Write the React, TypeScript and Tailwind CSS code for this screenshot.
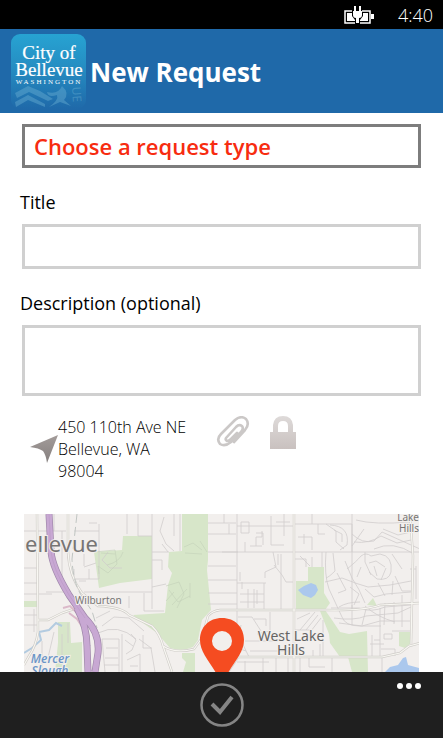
import React from 'react';

const parks = [
  'M99 22H128V65L96 69L75 74L70 38L98 36Z',
  'M158 0H184V46L183 56L187 96L178 106L174 126L169 133Q158 138 146 134L133 119L119 109L109 101L141 99L144 71L148 59L144 53L145 38L158 37Z',
  'M34 108H46L47 129L58 128V158H31L34 129Z',
  'M158 139H171V158H159L162 148L158 144Z',
  'M0 87H13V93H0Z',
  'M284 53H300V79L306 89L301 96L308 106L316 118L325 120L343 117L344 158H328L324 143L316 143L306 129L305 120L296 97L272 95V67L284 67Z',
  'M375 118H386V130L381 134L375 132Z',
  'M343 91L349 84L353 92Z',
];

const water = [
  'M274 76L280 72L287 69L292 71L294 76L291 81L287 84L279 81Z',
  'M361 158L366 153L374 151L379 144L382 143L384 151L395 154V158Z',
];

const mainRoads = [
  'M13 0L14 118Q12 132 5 142L0 151',
  'M270 0V158',
  'M44 0V38Q45 62 58 79L74 92Q98 93 105 101L128 112Q136 120 139 132L148 158',
  'M139 132Q151 140 170 135L178 124L184 102Q188 97 196 96H300Q340 97 356 91L396 89',
  'M14 106H24L38 99L50 95',
  'M210 143H358L376 139L385 132L396 129',
  'M386 0L389 42L387 130',
];

const sideRoads = [
  'M198 38H396M205 158L215 143',
  'M0 17H42M30 0V17M0 54H13M0 80H13M38 17V70M50 55V65H75V10',
  'M50 17H75M65 65V55M73 9H65M103 0V20M60 53L72 49M84 38L78 46L86 54H98',
  'M128 0V95M128 38H145M114 0V22M114 22H128M128 46H138V56M60 78H128M128 73L142 70M105 82V94M120 79V97H140',
  'M140 3L136 17L142 30L150 37M150 0V22M138 30L144 38M156 0V37',
  'M184 9H212M184 20H212M184 38H214M184 52H212M184 66H213M184 79H213M184 90H213M213 0V96',
  'M200 0V9M205 10V20M213 12H270M217 8H225V19H217ZM232 32V23H238V17M221 28V38M247 2V31H260M252 8H266M260 0V22M232 19H239V31M226 32H238',
  'M257 40V96M249 38L252 53L241 58V64M250 51L258 61L262 68H270M254 40V51M213 69H242M216 67V58M240 69V96',
  'M216 80H240M216 88H240M224 75V94M230 75V94M218 68V75M213 96V110H206M233 76V90',
  'M270 10H328V38M302 10L312 17V28L320 35M306 11Q326 12 323 31L316 36M310 16L318 20V28M274 23H288V36M280 20V30M288 0V10M294 10V20H301',
  'M328 0V96M328 20Q338 30 350 27L358 18L396 35M330 28Q345 30 357 22L373 29L387 26M332 6Q350 11 386 8M340 15L328 32M359 15L374 21L387 18M350 35Q369 26 390 40',
  'M298 38V53M302 38Q300 61 305 75L318 103Q321 112 336 112H357M309 39L311 57Q305 63 302 64M271 45H282V53M288 43V53M276 42L286 52',
  'M313 59L322 76L314 79M321 47L328 64Q335 74 341 89M323 55Q333 47 337 42Q342 38 347 42L356 40Q369 42 367 58Q365 67 353 65L345 58',
  'M345 49L352 47L361 53M341 38V48L347 61M350 52L353 62M362 54L357 66M337 53L333 63M368 40L378 55M371 62L378 77H387',
  'M301 68L318 64Q333 70 344 73L366 71L387 67M326 73L335 80L330 91M341 75L350 83L362 80L387 78M354 69L361 82M369 67L368 81',
  'M307 94H335Q347 99 361 93L387 91M310 104Q330 107 342 102L374 99L387 93M315 109L338 112L356 107H386M328 91V111M342 95L338 111M356 94V118',
  'M336 88Q323 88 315 93M341 92Q353 103 371 108M361 89L360 111M370 88V110M378 81V113M392 52V85M386 55H392',
  'M356 118V143M360 120H368V125H360ZM348 121V143M356 126H350M346 130H360M368 117H386M357 135H371V142',
  'M273 105L286 99M276 116L291 98M282 116L294 101M287 117L297 104M299 106V143M270 116H286M246 98V117L233 120',
  'M214 103H228L237 117M212 116L225 143M217 111L213 135M221 127H254M226 137H270M230 105H242V112M211 133L222 137',
  'M213 148H245M221 147V158M239 143V158M252 144V158M264 143V158M276 143V158M285 143V153H301M289 136V143M296 130V143M308 143V158M358 143V158',
  'M72 104L86 97M78 112L90 103L105 104L120 117M74 119Q94 109 112 125M78 125H95V158M78 125L81 158M82 134H94M81 144H94M80 151H95',
  'M98 120V158M107 120L112 126L108 136L102 140M101 126L109 132M103 146L116 140V158M106 152H114M115 125L127 134L131 158M119 121V134M119 134H128',
  'M10 95V118M0 101H13M0 111H14M18 127V156M30 118L23 148M38 120V150M44 109V129M22 78H43M0 69H14M14 80H28M55 67H62M60 40V52',
];

const parkTrails = [
  'M70 38L91 36L93 50L84 59L74 52M77 39L91 40M83 51Q96 48 99 38M74 52L75 60',
  'M142 72L155 68L160 80L153 94M145 76L154 88L166 82M148 91L163 75M166 69V84M142 87L150 78',
  'M160 33L169 29L178 36M176 27L183 38M161 39L178 40',
];

const freeway = 'M25 0L27 37Q28 53 45 81L61 104Q76 119 74 139L71 158M53 94Q63 113 63 132L64 158';

function BatteryIcon() {
  return (
    <svg viewBox="0 0 30 18" className="h-[18px] w-[30px]" role="img" aria-label="Charging">
      <path d="M8 5H1V17H11M18 5H26V17H16" fill="none" stroke="#fff" strokeWidth="1.5" />
      <path d="M3 7H8V10L11 14V15H3ZM19 7H24V15H16V14L19 10Z" fill="#fff" />
      <path d="M9 5H18V9Q18 12 15 12V17H12V12Q9 12 9 9ZM10 0H12V5H10ZM15 0H17V5H15Z" fill="#fff" />
      <path d="M27 8H30V13H27Z" fill="#fff" />
    </svg>
  );
}

function CityLogo() {
  return (
    <svg viewBox="0 0 75 75" className="size-[75px] shrink-0" role="img" aria-label="City of Bellevue Washington">
      <defs>
        <linearGradient id="logoFill" x1="0" y1="0" x2="0" y2="1">
          <stop offset="0" stopColor="#27a3d2" />
          <stop offset="0.45" stopColor="#258dc2" />
          <stop offset="1" stopColor="#1f69a9" />
        </linearGradient>
      </defs>
      <rect width="75" height="75" rx="9" fill="url(#logoFill)" />
      <g fill="#68add2" opacity="0.45">
        <path d="M4 59L17 52L29 57L42 65L37 67L18 58L6 64ZM4 68L17 61L34 70V73L17 66L5 73Z" />
        <path d="M51 52Q59 59 53 66L60 72L49 68L38 73Q48 66 46 61Q37 64 36 58Q47 61 51 52Z" />
        <text x="0" y="0" fontSize="12" fontFamily="Open Sans, sans-serif" transform="translate(61 53) rotate(86)">
          UE
        </text>
      </g>
      <g fill="#fff" textAnchor="middle" fontFamily="Liberation Serif, serif">
        <text x="38" y="25" fontSize="19" stroke="#fff" strokeWidth="0.2">
          City of
        </text>
        <text x="38" y="42" fontSize="19" stroke="#fff" strokeWidth="0.2">
          Bellevue
        </text>
        <text x="38" y="50" fontSize="7" letterSpacing="2">
          WASHINGTON
        </text>
      </g>
    </svg>
  );
}

function LocationIcon() {
  return (
    <svg viewBox="0 0 28 28" className="size-7" aria-hidden="true">
      <defs>
        <linearGradient id="arrowFill" x1="0" y1="0" x2="0" y2="1">
          <stop offset="0" stopColor="#a39c9a" />
          <stop offset="1" stopColor="#857f7e" />
        </linearGradient>
      </defs>
      <path d="M28 0L0 12Q9 13 13 16Q16 20 17 28Z" fill="url(#arrowFill)" />
    </svg>
  );
}

function ClipIcon() {
  return (
    <svg viewBox="0 0 34 32" className="h-8 w-[34px]" aria-hidden="true">
      <path
        d="M10 22L20 11Q23 8 26 10Q28 13 25 16L15 26Q9 31 4 28Q0 23 5 18L19 4Q25 -1 30 3Q34 8 29 14L18 26M10 22Q9 24 11 25Q13 25 15 23L21 17"
        fill="none"
        stroke="#cbc8c7"
        strokeWidth="2.6"
        strokeLinecap="round"
        strokeLinejoin="round"
      />
    </svg>
  );
}

function LockIcon() {
  return (
    <svg viewBox="0 0 26 34" className="h-[34px] w-[26px]" aria-hidden="true">
      <defs>
        <linearGradient id="lockFill" x1="0" y1="0" x2="0" y2="1">
          <stop offset="0" stopColor="#dedad9" />
          <stop offset="1" stopColor="#c9c1bf" />
        </linearGradient>
      </defs>
      <path
        d="M0 16H3V9Q4 0 13 0Q22 0 23 9V16H26V33H0ZM8 16H18V10Q18 5 13 5Q8 5 8 10Z"
        fill="url(#lockFill)"
        fillRule="evenodd"
      />
    </svg>
  );
}

function RequestMap() {
  return (
    <svg
      viewBox="0 0 395 158"
      preserveAspectRatio="xMidYMin slice"
      className="block size-full bg-[#f2efed]"
      role="img"
      aria-label="Map of Bellevue"
    >
      {parks.map((d) => (
        <path key={d} d={d} fill="#d7e6c9" />
      ))}
      {water.map((d) => (
        <path key={d} d={d} fill="#abc8ed" />
      ))}
      <path d="M0 139L8 134L17 126L15 118L25 116L32 109L38 112" fill="none" stroke="#b3cbe0" strokeWidth="2" />
      <g fill="none" stroke="#d0cdcd" strokeWidth="0.8">
        {sideRoads.map((d) => (
          <path key={d} d={d} />
        ))}
      </g>
      <g fill="none" stroke="#c3d0b9" strokeWidth="0.6">
        {parkTrails.map((d) => (
          <path key={d} d={d} />
        ))}
      </g>
      <g fill="none" stroke="#cfccc8" strokeWidth="2.4">
        {mainRoads.map((d) => (
          <path key={d} d={d} />
        ))}
      </g>
      <g fill="none" stroke="#f8f7f2" strokeWidth="1.2">
        {mainRoads.map((d) => (
          <path key={d} d={d} />
        ))}
      </g>
      <path d="M53 0L48 45Q49 70 59 84L68 97L73 114" fill="none" stroke="#c0c5c2" strokeWidth="1" strokeDasharray="9 4" />
      <path d="M39 94L46 92L55 101M45 99L53 105L59 114" fill="none" stroke="#dbb9c9" strokeWidth="2" />
      <path d={freeway} fill="none" stroke="#a088ab" strokeWidth="7" />
      <path d={freeway} fill="none" stroke="#c8a8d3" strokeWidth="5.6" />
      <path d="M25 0L27 37Q28 53 45 81L61 104" fill="none" stroke="#b899c4" strokeWidth="0.6" />
      <g fill="#656463" stroke="#f2efed" strokeWidth="2" paintOrder="stroke" fontFamily="Noto Sans, sans-serif">
        <text x="1" y="38" fontSize="22" fill="#777574">
          ellevue
        </text>
        <text x="51" y="90" fontSize="10" fill="#777574">
          Wilburton
        </text>
        <text x="267" y="127" fontSize="14" textAnchor="middle">
          <tspan x="267">West Lake</tspan>
          <tspan x="267" dy="14">
            Hills
          </tspan>
        </text>
        <text x="395" y="7" fontSize="10" fill="#777574" textAnchor="end">
          <tspan x="395">Lake</tspan>
          <tspan x="395" dy="11">
            Hills
          </tspan>
        </text>
        <text
          y="149"
          fill="#6b95c7"
          fontStyle="italic"
          fontWeight="600"
          fontSize="12"
          fontFamily="Open Sans, sans-serif"
          textAnchor="middle"
        >
          <tspan x="26">Mercer</tspan>
          <tspan x="26" dy="12">
            Slough
          </tspan>
        </text>
      </g>
    </svg>
  );
}

function MapPin() {
  return (
    <svg viewBox="0 0 46 66" className="h-[66px] w-[46px]" aria-hidden="true">
      <path
        fillRule="evenodd"
        d="M23 0C36 0 45 9 45 22C45 36 33 45 23 66C13 45 1 36 1 22C1 9 10 0 23 0ZM23 13A10 10 0 1 0 23 33A10 10 0 1 0 23 13Z"
        fill="#f54c21"
      />
    </svg>
  );
}

export default function App() {
  return (
    <div className="flex h-screen flex-col overflow-hidden bg-white font-['Open_Sans','Noto_Sans',sans-serif] text-black">
      <div className="flex h-[29px] shrink-0 items-center justify-end gap-6 bg-black pr-[10px] text-white">
        <BatteryIcon />
        <time className="text-[18px] leading-6 font-light">4:40</time>
      </div>
      <header className="flex h-[84px] shrink-0 items-center gap-1 bg-[#1f69a9] px-[11px]">
        <CityLogo />
        <h1 className="pt-0.5 text-[26px] leading-8 font-bold text-white">New Request</h1>
      </header>

      <main className="flex min-h-0 flex-1 flex-col px-[22px] pt-[11px]">
        <button
          type="button"
          className="h-[44px] shrink-0 border-3 border-[#7d7d7d] px-[9px] text-left text-[22px] leading-8 font-semibold text-[#f72c10]"
        >
          Choose a request type
        </button>
        <label htmlFor="title" className="-ml-0.5 pt-[22px] pb-[10px] text-[18px] leading-6">
          Title
        </label>
        <input
          id="title"
          type="text"
          className="h-[45px] shrink-0 border-3 border-[#d0d0d0] px-2 text-[18px] outline-none"
        />
        <label htmlFor="description" className="-ml-0.5 pt-[22px] pb-[10px] text-[18px] leading-6">
          Description (optional)
        </label>
        <textarea
          id="description"
          className="h-[71px] shrink-0 resize-none border-3 border-[#d0d0d0] px-2 text-[18px] outline-none"
        />

        <div className="flex shrink-0 items-start pt-5 pl-2">
          <button type="button" aria-label="Use current location" className="pt-[19px]">
            <LocationIcon />
          </button>
          <address className="w-[158px] text-[16px] leading-[22px] font-light not-italic">
            450 110th Ave NE
            <br />
            Bellevue, WA
            <br />
            98004
          </address>
          <button type="button" aria-label="Attach file">
            <ClipIcon />
          </button>
          <button type="button" aria-label="Make private" className="ml-5">
            <LockIcon />
          </button>
        </div>

        <div className="relative mx-0.5 mt-8 min-h-0 flex-1 overflow-hidden">
          <RequestMap />
          <div className="absolute top-[104px] left-1/2 -translate-x-1/2">
            <MapPin />
          </div>
        </div>
      </main>

      <footer className="relative flex h-[66px] shrink-0 items-center justify-center bg-[#1f1f1f]">
        <button type="button" aria-label="Submit request">
          <svg viewBox="0 0 44 44" className="size-11" aria-hidden="true">
            <circle cx="22" cy="22" r="20.5" fill="none" stroke="#858585" strokeWidth="2.5" />
            <path d="M12 21L20 29L32 14" fill="none" stroke="#858585" strokeWidth="4" />
          </svg>
        </button>
        <button
          type="button"
          aria-label="More options"
          className="absolute top-2 right-[22px] flex h-3 items-center gap-[3px]"
        >
          <span className="size-1.5 rounded-full bg-white" />
          <span className="size-1.5 rounded-full bg-white" />
          <span className="size-1.5 rounded-full bg-white" />
        </button>
      </footer>
    </div>
  );
}
